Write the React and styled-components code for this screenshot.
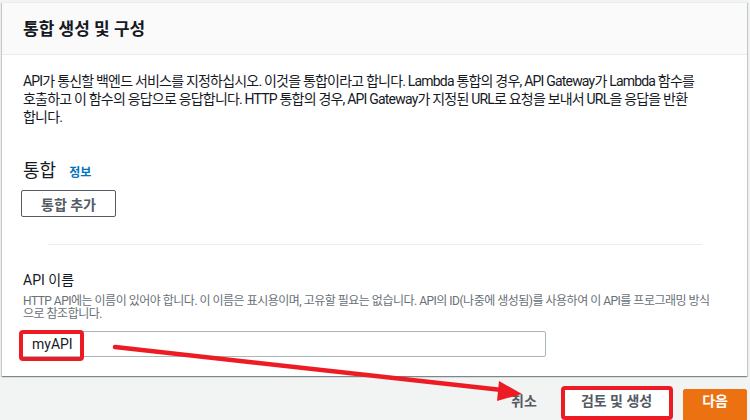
import React from 'react';
import styled, { createGlobalStyle } from 'styled-components';

const GlobalStyle = createGlobalStyle`
  html, body {
    margin: 0;
    padding: 0;
    background: #f2f3f3;
    font-family: "Roboto", "Noto Sans CJK KR", sans-serif;
    color: #16191f;
  }
  * {
    box-sizing: border-box;
  }
`;

const Page = styled.div`
  position: relative;
  width: 750px;
  height: 420px;
  overflow: hidden;
  padding: 2px 3px 0 2px;
`;

const Card = styled.section`
  background: #fff;
  border-top: 1px solid #eaeded;
  box-shadow: 0 1px 1px 0 rgba(0, 28, 36, 0.3), 1px 1px 1px 0 rgba(0, 28, 36, 0.15),
    -1px 1px 1px 0 rgba(0, 28, 36, 0.15);
`;

const CardHeader = styled.header`
  height: 52px;
  display: flex;
  align-items: center;
  padding: 0 21px;
  background: #fafafa;
  border-bottom: 1px solid #eaeded;
`;

const Title = styled.h2`
  margin: 0;
  font-size: 17px;
  font-weight: 700;
  line-height: 20px;
`;

const CardBody = styled.div`
  padding: 17px 20px 19px 19px;
`;

const Intro = styled.p`
  margin: 0;
  font-size: 14px;
  line-height: 18px;
  letter-spacing: -0.8px;
  white-space: nowrap;
  padding-left: 2px;
`;

const SectionRow = styled.div`
  margin-top: 34px;
  display: flex;
  align-items: baseline;
  gap: 13px;
  padding-left: 2px;
`;

const SectionLabel = styled.span`
  font-size: 18px;
  line-height: 22px;
`;

const InfoLink = styled.a`
  font-size: 12px;
  font-weight: 700;
  color: #0073bb;
  text-decoration: none;
`;

const OutlineButton = styled.button`
  margin-top: 8px;
  height: 27px;
  padding: 0 19px;
  background: #fff;
  border: 1px solid #545b64;
  border-radius: 2px;
  font-family: inherit;
  font-size: 14px;
  font-weight: 700;
  color: #545b64;
`;

const Divider = styled.hr`
  margin: 27px 25px 0 27px;
  border: 0;
  border-top: 1px solid #eaeded;
`;

const FieldLabel = styled.label`
  display: block;
  margin-top: 25px;
  font-size: 14px;
  line-height: 20px;
  padding-left: 2px;
`;

const FieldHint = styled.p`
  margin: 5px 0 0;
  font-size: 12px;
  line-height: 13px;
  letter-spacing: -0.5px;
  color: #687078;
  white-space: nowrap;
  padding-left: 2px;
`;

const TextInput = styled.input`
  display: block;
  margin-top: 10px;
  width: 525px;
  height: 26px;
  padding: 0 10px;
  border: 1px solid #aab7b8;
  border-radius: 2px;
  font-family: inherit;
  font-size: 14px;
  color: #16191f;
  outline: none;
`;

const Footer = styled.div`
  margin-top: 13px;
  display: flex;
  justify-content: flex-end;
  align-items: flex-start;
`;

const Button = styled.button`
  margin-left: ${(p) => p.$gap || 0}px;
  padding: 0 ${(p) => p.$pad || 18}px 8px;
  line-height: 22px;
  border: 1px solid ${(p) => (p.$variant === 'primary' ? '#ec7211' : p.$variant === 'normal' ? '#fff' : 'transparent')};
  border-radius: 2px;
  background: ${(p) => (p.$variant === 'primary' ? '#ec7211' : p.$variant === 'normal' ? '#fff' : 'transparent')};
  color: ${(p) => (p.$variant === 'primary' ? '#fff' : '#545b64')};
  font-family: inherit;
  font-size: 14px;
  font-weight: 700;
`;

const Annotations = styled.svg`
  position: absolute;
  left: 0;
  top: 0;
  pointer-events: none;
`;

export default function App() {
  return (
    <>
      <GlobalStyle />
      <Page>
        <Card>
          <CardHeader>
            <Title>통합 생성 및 구성</Title>
          </CardHeader>
          <CardBody>
            <Intro>
              API가 통신할 백엔드 서비스를 지정하십시오. 이것을 통합이라고 합니다. Lambda 통합의 경우, API Gateway가 Lambda 함수를
              <br />
              호출하고 이 함수의 응답으로 응답합니다. HTTP 통합의 경우, API Gateway가 지정된 URL로 요청을 보내서 URL을 응답을 반환
              <br />
              합니다.
            </Intro>
            <SectionRow>
              <SectionLabel>통합</SectionLabel>
              <InfoLink href="#">정보</InfoLink>
            </SectionRow>
            <OutlineButton>통합 추가</OutlineButton>
            <Divider />
            <FieldLabel htmlFor="api-name">API 이름</FieldLabel>
            <FieldHint>
              HTTP API에는 이름이 있어야 합니다. 이 이름은 표시용이며, 고유할 필요는 없습니다. API의 ID(나중에 생성됨)를 사용하여 이 API를 프로그래밍 방식
              <br />
              으로 참조합니다.
            </FieldHint>
            <TextInput id="api-name" defaultValue="myAPI" />
          </CardBody>
        </Card>
        <Footer>
          <Button $pad={16}>취소</Button>
          <Button $variant="normal" $gap={8} $pad={18}>
            검토 및 생성
          </Button>
          <Button $variant="primary" $gap={12} $pad={18}>
            다음
          </Button>
        </Footer>
        <Annotations width="750" height="420" viewBox="0 0 750 420">
          <rect x="21" y="332" width="61" height="27" rx="2" fill="none" stroke="#ed1c24" strokeWidth="4" />
          <rect x="563" y="388" width="108" height="30" rx="2" fill="none" stroke="#ed1c24" strokeWidth="4" />
          <line x1="115" y1="347" x2="502" y2="390" stroke="#ed1c24" strokeWidth="4.5" strokeLinecap="round" />
          <polygon points="522,394 499,381 497,401" fill="#ed1c24" />
        </Annotations>
      </Page>
    </>
  );
}
